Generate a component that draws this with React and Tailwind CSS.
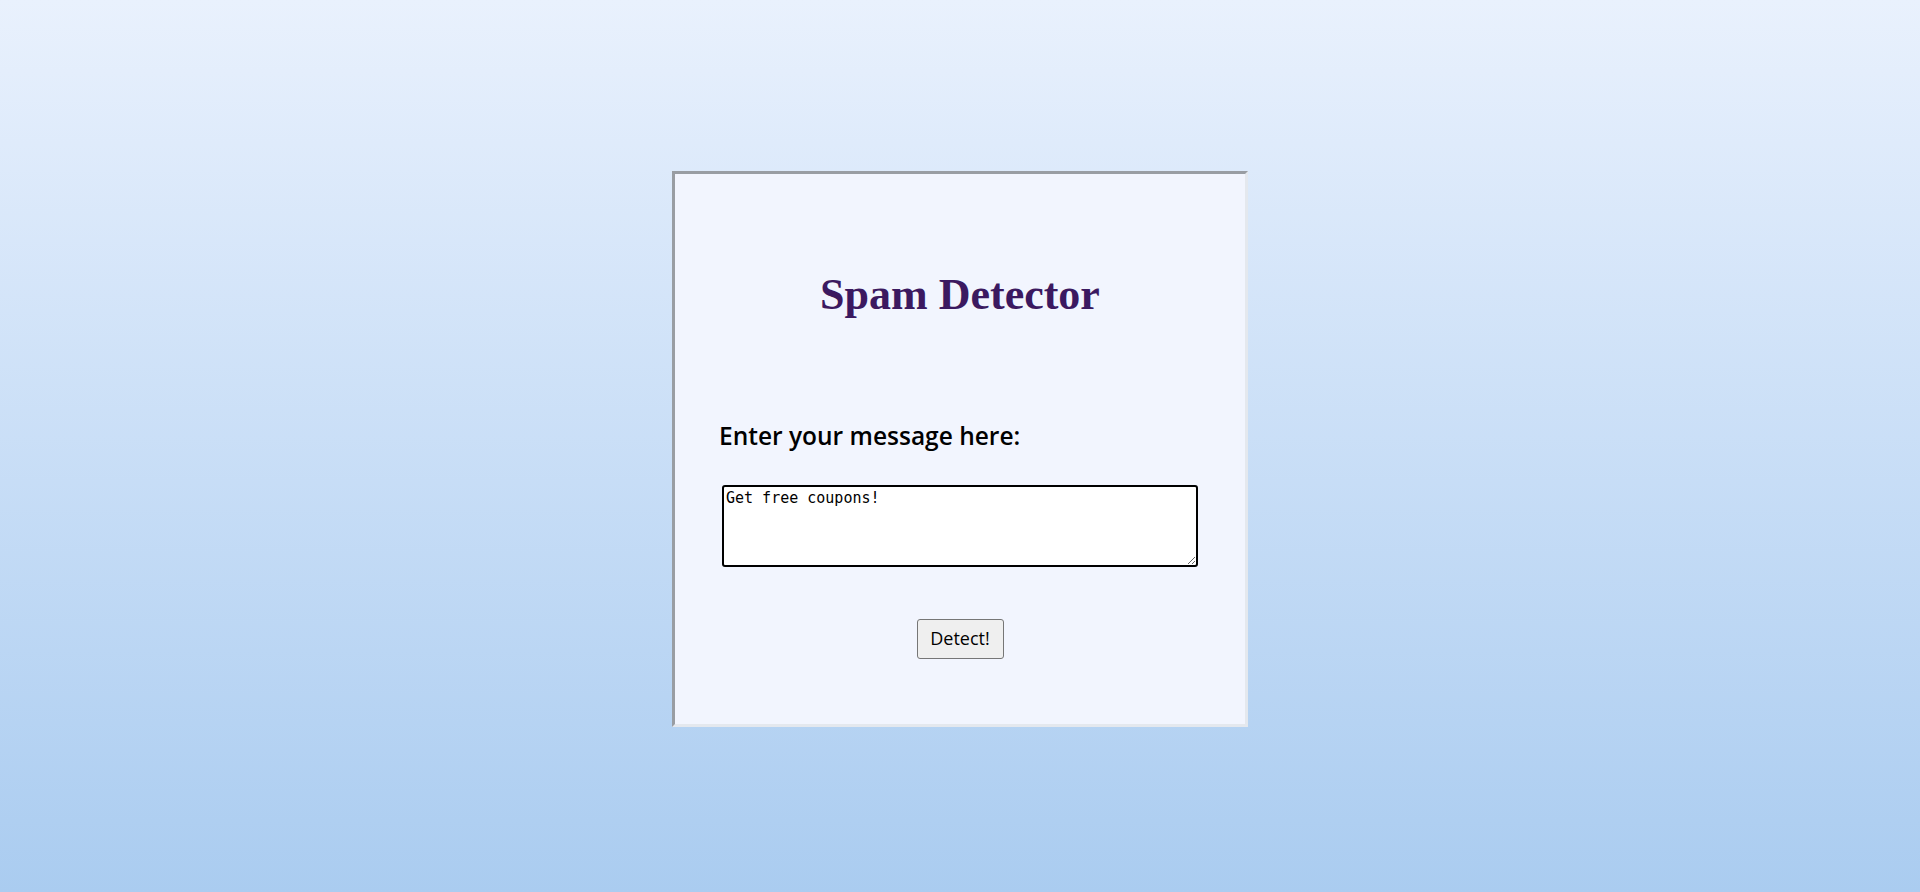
export default function App() {
  return (
    <div className="min-h-[892px] w-full bg-gradient-to-b from-[#e9f1fd] to-[#aaccf0] pt-[171px]">
      <div className="mx-auto flex h-[556px] w-[576px] flex-col border-[3px] border-t-[#999da3] border-l-[#999da3] border-r-[#e4e8ee] border-b-[#e4e8ee] bg-[#f2f5fe]">
        <h1 className="mt-[99px] text-center font-['Liberation_Serif',serif] text-[44px] font-bold leading-none text-[#3b1960]">
          Spam Detector
        </h1>

        <label
          htmlFor="msg"
          className="ml-[44px] mt-[107px] font-['Open_Sans','Liberation_Sans',sans-serif] text-[24.5px] font-semibold leading-none text-black"
        >
          Enter your message here:
        </label>

        <textarea
          id="msg"
          defaultValue="Get free coupons!"
          className="mx-auto mt-[36px] block h-[82px] w-[476px] rounded-[3px] border-2 border-black bg-white p-[2px] font-['DejaVu_Sans_Mono','Liberation_Mono',monospace] text-[15px] leading-[18px] text-black outline-none"
        />

        <button className="mx-auto mt-[52px] h-[40px] w-[87px] rounded-[3px] border border-[#767676] bg-[#efefef] font-['Open_Sans','Liberation_Sans',sans-serif] text-[18px] text-black">
          Detect!
        </button>
      </div>
    </div>
  );
}
